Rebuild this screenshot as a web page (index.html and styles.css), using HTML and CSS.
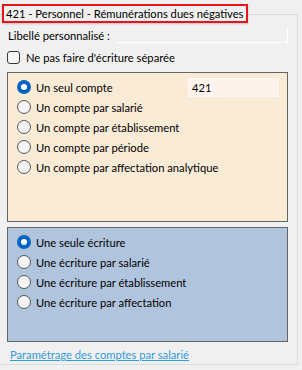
FILE: index.html
```html
<!DOCTYPE html>
<html lang="fr">
<head>
    <meta charset="UTF-8">
    <title>Rémunérations dues négatives</title>
    <link rel="stylesheet" href="styles.css">
</head>
<body>
    <div class="group">
        <div class="group-title">421 - Personnel - Rémunérations dues négatives</div>

        <div class="libelle-row">
            <span class="libelle-label">Libellé personnalisé :</span>
            <span class="libelle-input"></span>
        </div>

        <label class="check-row">
            <span class="check"></span>
            <span>Ne pas faire d'écriture séparée</span>
        </label>

        <!-- Choix du compte -->
        <div class="panel panel-compte">
            <div class="radio-row">
                <span class="radio checked"></span>
                <span>Un seul compte</span>
                <span class="compte-input">421</span>
            </div>
            <div class="radio-row"><span class="radio"></span><span>Un compte par salarié</span></div>
            <div class="radio-row"><span class="radio"></span><span>Un compte par établissement</span></div>
            <div class="radio-row"><span class="radio"></span><span>Un compte par période</span></div>
            <div class="radio-row"><span class="radio"></span><span>Un compte par affectation analytique</span></div>
        </div>

        <!-- Choix de l'écriture -->
        <div class="panel panel-ecriture">
            <div class="radio-row"><span class="radio checked"></span><span>Une seule écriture</span></div>
            <div class="radio-row"><span class="radio"></span><span>Une écriture par salarié</span></div>
            <div class="radio-row"><span class="radio"></span><span>Une écriture par établissement</span></div>
            <div class="radio-row"><span class="radio"></span><span>Une écriture par affectation</span></div>
        </div>

        <a class="link" href="#">Paramétrage des comptes par salarié</a>
    </div>
</body>
</html>
```

FILE: styles.css
```css
/* Base */
body {
    margin: 0;
    background-color: #f0f0f0;
    font-family: Lato, "Noto Sans", sans-serif;
    font-size: 11.2px;
    color: #000;
}

/* Group box */
.group {
    position: relative;
    box-sizing: border-box;
    height: 351px;
    margin: 14px 4px 0 -1px;
    padding: 12px 9px 0 7px;
    border: 1px solid #dcdcdc;
}
.group-title {
    position: absolute;
    top: -11px;
    left: 2px;
    padding: 0 3px 0 2px;
    line-height: 15px;
    background-color: #f0f0f0;
    border: 2px solid #e8131b;
    box-shadow: 0 1px 2px rgba(0, 0, 0, 0.2);
    white-space: nowrap;
}

/* Libellé */
.libelle-row {
    display: flex;
    align-items: center;
    height: 16px;
}
.libelle-label {
    flex: none;
    padding-left: 1px;
    white-space: nowrap;
}
.libelle-input {
    box-sizing: border-box;
    flex: none;
    width: 171px;
    height: 16px;
    margin-left: auto;
    border-right: 1px solid #fff;
    border-bottom: 1px solid #fff;
}

/* Checkbox */
.check-row {
    display: flex;
    align-items: center;
    gap: 6px;
    height: 20px;
    margin-top: 4px;
    white-space: nowrap;
}
.check {
    box-sizing: border-box;
    flex: none;
    width: 13px;
    height: 13px;
    border: 1px solid #3a3a3a;
    border-radius: 3px;
    background-color: #f6f6f6;
}

/* Panels */
.panel {
    box-sizing: border-box;
    margin-top: 5px;
    padding: 4px 8px 0 9px;
    border: 1px solid #646464;
}
.panel-compte {
    height: 150px;
    background-color: #faebd7;
}
.panel-ecriture {
    height: 115px;
    background-color: #b0c4de;
}

/* Radio rows */
.radio-row {
    display: flex;
    align-items: center;
    gap: 5px;
    height: 20px;
    white-space: nowrap;
}
.radio {
    box-sizing: border-box;
    flex: none;
    width: 14px;
    height: 14px;
    border: 1px solid #555;
    border-radius: 50%;
    background-color: #f5f5f5;
}
.radio.checked {
    border: 4.5px solid #0063c1;
    background-color: #fff;
}

.compte-input {
    box-sizing: border-box;
    flex: none;
    width: 91px;
    height: 19px;
    margin-left: auto;
    padding-left: 3px;
    line-height: 17px;
    background-color: #fef3ec;
    border: 1px solid #fff8f2;
}

/* Link */
.link {
    display: inline-block;
    margin-top: 5px;
    padding-left: 3px;
    line-height: 16px;
    color: #3399e0;
    text-decoration: underline;
}
```
